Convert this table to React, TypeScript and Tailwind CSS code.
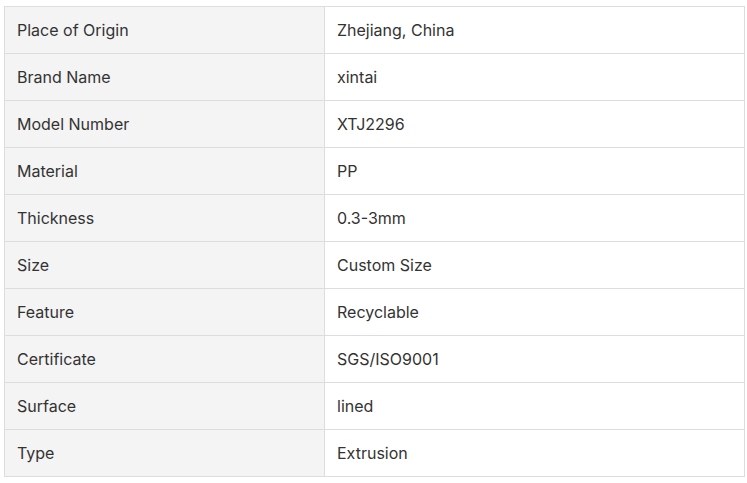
import React from "react";

const rows: [string, string][] = [
  ["Place of Origin", "Zhejiang, China"],
  ["Brand Name", "xintai"],
  ["Model Number", "XTJ2296"],
  ["Material", "PP"],
  ["Thickness", "0.3-3mm"],
  ["Size", "Custom Size"],
  ["Feature", "Recyclable"],
  ["Certificate", "SGS/ISO9001"],
  ["Surface", "lined"],
  ["Type", "Extrusion"],
];

export default function App() {
  return (
    <div className="w-[747px] h-[483px] bg-white pt-[6px] pl-[4px]" style={{ fontFamily: "Inter, 'Noto Sans', sans-serif" }}>
      <div className="w-[741px] border border-[#dddddd] flex flex-col">
        {rows.map(([k, v], i) => (
          <div key={k} className={`flex h-[46px] box-content ${i > 0 ? "border-t border-[#dddddd]" : ""}`}>
            <div className="w-[320px] shrink-0 border-r border-[#dddddd] bg-[#f4f4f4] flex items-center pl-[12px] text-[16px] text-[#333333]">
              {k}
            </div>
            <div className="flex-1 flex items-center pl-[12px] text-[16px] text-[#333333]">
              {v}
            </div>
          </div>
        ))}
      </div>
    </div>
  );
}
